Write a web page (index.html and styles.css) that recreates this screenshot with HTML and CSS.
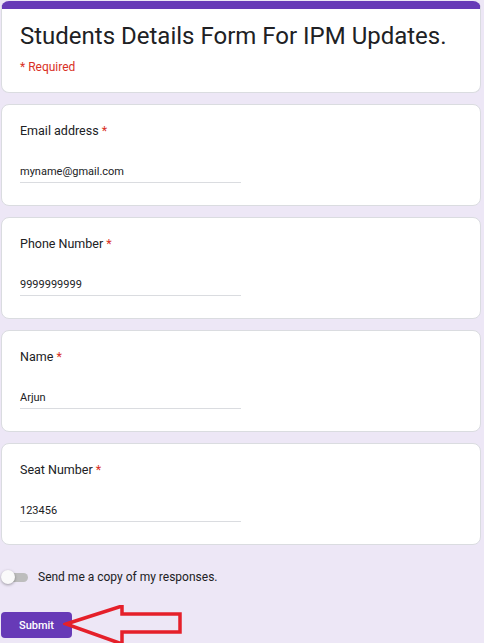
FILE: index.html
```html
<!DOCTYPE html>
<html lang="en">
<head>
  <meta charset="UTF-8">
  <title>Students Details Form For IPM Updates.</title>
  <link rel="stylesheet" href="styles.css">
</head>
<body>
  <div class="form">
    <!-- Header card -->
    <div class="card header">
      <h1>Students Details Form For IPM Updates.</h1>
      <p class="required">* Required</p>
    </div>

    <div class="card question">
      <label>Email address <span class="star">*</span></label>
      <div class="answer">myname@gmail.com</div>
    </div>

    <div class="card question">
      <label>Phone Number <span class="star">*</span></label>
      <div class="answer">9999999999</div>
    </div>

    <div class="card question">
      <label>Name <span class="star">*</span></label>
      <div class="answer">Arjun</div>
    </div>

    <div class="card question">
      <label>Seat Number <span class="star">*</span></label>
      <div class="answer">123456</div>
    </div>

    <div class="copy-row">
      <span class="toggle"><span class="thumb"></span></span>
      <span class="copy-text">Send me a copy of my responses.</span>
    </div>

    <div class="submit-row">
      <button type="button" class="btn">Submit</button>
      <svg class="arrow" width="124" height="42" viewBox="0 0 124 42">
        <polygon points="3,19 59,1 59,9 117,9 117,27 59,27 59,39" fill="none" stroke="#e5202a" stroke-width="3.5" stroke-linejoin="miter"/>
      </svg>
    </div>
  </div>
</body>
</html>
```

FILE: styles.css
```css
* {
  margin: 0;
  padding: 0;
  box-sizing: border-box;
}
body {
  background: #ede7f6;
  font-family: Roboto, 'Liberation Sans', sans-serif;
  color: #202124;
  height: 643px;
  overflow: hidden;
}
.form {
  width: 480px;
  margin-left: 1px;
  padding-top: 1px;
  display: flex;
  flex-direction: column;
  gap: 11px;
}
.card {
  background: #fff;
  border: 1px solid #dadce0;
  border-radius: 8px;
}
.header {
  height: 92px;
  border-top: 8px solid #673ab7;
  padding: 11px 18px 0;
}
h1 {
  font-weight: 400;
  font-size: 24px;
  line-height: 32px;
  white-space: nowrap;
  color: #202124;
}
.required {
  margin-top: 7px;
  font-size: 12px;
  line-height: 16px;
  color: #d93025;
}
.question {
  height: 102px;
  padding: 16px 18px 0;
}
label {
  display: block;
  font-size: 12.5px;
  line-height: 20px;
  color: #202124;
}
.star {
  color: #d93025;
}
.answer {
  width: 221px;
  margin-top: 20px;
  font-size: 11px;
  line-height: 21px;
  border-bottom: 1px solid #dadce0;
}
.copy-row {
  margin-top: 9px;
  height: 24px;
  display: flex;
  align-items: center;
  gap: 10px;
}
.toggle {
  position: relative;
  width: 26px;
  height: 9px;
  margin-left: 1px;
  border-radius: 5px;
  background: #bdbdbd;
}
.thumb {
  position: absolute;
  left: -1px;
  top: -3px;
  width: 14px;
  height: 14px;
  border-radius: 50%;
  background: #fafafa;
  box-shadow: 0 1px 3px rgba(0,0,0,0.35);
}
.copy-text {
  font-size: 12px;
  color: #202124;
}
.submit-row {
  position: relative;
  margin-top: 12px;
}
.btn {
  width: 71px;
  height: 26px;
  border: none;
  border-radius: 4px;
  background: #673ab7;
  color: #fff;
  font-family: Roboto, sans-serif;
  font-size: 11px;
  font-weight: 500;
}
.arrow {
  position: absolute;
  left: 62px;
  top: -7px;
}
```
